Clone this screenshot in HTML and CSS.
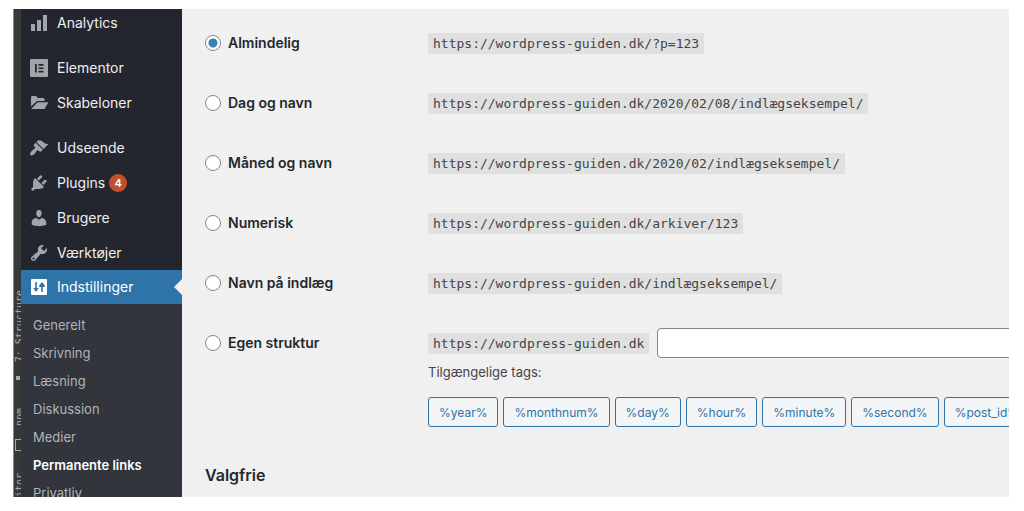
FILE: index.html
```
<!DOCTYPE html>
<html lang="da">
<head>
<meta charset="utf-8">
<title>Permanente links</title>
<link rel="stylesheet" href="styles.css">
</head>
<body>
<div class="frame">
  <div class="strip" aria-hidden="true">
    <span class="strip-text">7: Structure</span>
    <span class="strip-dot"></span>
    <span class="strip-text">npm</span>
    <span class="strip-box"></span>
    <span class="strip-text">itor</span>
  </div>
  <nav class="sidebar">
    <ul class="menu">
      <li><a href="#"><svg viewBox="0 0 20 20"><path d="M2 11h4v7H2zM8 7h4v11H8zM14 2h4v16h-4z"/></svg>Analytics</a></li>
      <li class="spaced"><a href="#"><svg viewBox="0 0 20 20"><path fill-rule="evenodd" d="M2 1h16a1 1 0 0 1 1 1v16a1 1 0 0 1-1 1H2a1 1 0 0 1-1-1V2a1 1 0 0 1 1-1zM6 6v8.500h1.800V6zM9.500 6v1.700h5V6zM9.500 9.400v1.700h5V9.400zM9.500 12.800v1.700h5v-1.700z"/></svg>Elementor</a></li>
      <li><a href="#"><svg viewBox="0 0 20 20"><path d="M2 4.500C2 3.500 2.500 3 3.500 3h3.600l1.800 2H14c1 0 1.500.5 1.500 1.500V8H8L2 13.500zM8.600 9.300H19.500L15.500 16H2.200z"/></svg>Skabeloner</a></li>
      <li class="spaced"><a href="#"><svg viewBox="0 0 20 20"><path d="M14.480 11.060L7.410 3.990l1.500-1.500c.5-.56 2.300-.47 3.510.32 1.210.8 1.430 1.280 2.910 2.100 1.180.64 2.450 1.260 4.450.85zm-.71.71L6.700 4.700 4.930 6.470c-.39.39-.39 1.020 0 1.410l1.060 1.060c.39.39.39 1.030 0 1.420-.6.6-1.430 1.110-2.210 1.690-.35.26-.7.53-1.010.84C1.430 14.230.4 16.080 1.400 17.070c.99 1 2.840-.03 4.180-1.360.31-.31.58-.66.85-1.020.57-.78 1.080-1.610 1.690-2.210.39-.39 1.020-.39 1.410 0l1.060 1.060c.39.39 1.020.39 1.410 0z"/></svg>Udseende</a></li>
      <li><a href="#"><svg viewBox="0 0 20 20"><path d="M13.110 4.360L9.870 7.600 8 5.730l3.240-3.240c.35-.34 1.050-.2 1.560.32.52.51.66 1.210.31 1.550zm-8 1.770l.91-1.120 9.010 9.010-1.190.84c-.71.71-2.630 1.160-3.820 1.160H6.140L4.900 17.260c-.59.59-1.540.59-2.120 0-.59-.58-.59-1.530 0-2.120l1.240-1.240v-3.880c0-1.130.4-3.190 1.090-3.890zm7.260 3.970l3.240-3.240c.34-.35 1.040-.21 1.550.31.52.51.66 1.210.31 1.550l-3.240 3.250z"/></svg>Plugins <span class="badge">4</span></a></li>
      <li><a href="#"><svg viewBox="0 0 20 20"><path d="M10 9.250c-2.270 0-2.730-3.440-2.730-3.440C7 4.020 7.820 2 9.970 2c2.160 0 2.980 2.020 2.710 3.810 0 0-.41 3.440-2.680 3.440zm0 2.570L12.720 10c2.390 0 4.520 2.330 4.520 4.530v2.490s-3.650 1.130-7.240 1.130c-3.650 0-7.240-1.130-7.240-1.130v-2.490c0-2.250 1.940-4.480 4.470-4.480z"/></svg>Brugere</a></li>
      <li><a href="#"><svg viewBox="0 0 20 20"><path d="M16.680 9.770c-1.340 1.340-3.300 1.670-4.950.99l-5.410 6.520c-.99.99-2.590.99-3.580 0s-.99-2.590 0-3.570l6.520-5.420c-.68-1.650-.35-3.610.99-4.950 1.280-1.280 3.120-1.620 4.720-1.060l-2.890 2.890 2.820 2.820 2.860-2.870c.53 1.580.18 3.390-1.080 4.650zM3.810 16.210c.4.39 1.040.39 1.430 0 .4-.4.4-1.040 0-1.430-.39-.4-1.030-.4-1.430 0-.39.39-.39 1.030 0 1.430z"/></svg>Værktøjer</a></li>
      <li><a href="#" class="current"><svg viewBox="0 0 20 20"><path fill-rule="evenodd" d="M3 2h14a1 1 0 0 1 1 1v14a1 1 0 0 1-1 1H3a1 1 0 0 1-1-1V3a1 1 0 0 1 1-1zM6.200 5v6H4.200L7 15l2.800-4H7.800V5zM12.200 15V10H10.200V8.500L13 5l2.800 3.500V10H13.800v5z"/></svg>Indstillinger</a></li>
    </ul>
    <ul class="submenu">
      <li><a href="#">Generelt</a></li>
      <li><a href="#">Skrivning</a></li>
      <li><a href="#">Læsning</a></li>
      <li><a href="#">Diskussion</a></li>
      <li><a href="#">Medier</a></li>
      <li><a href="#" class="active">Permanente links</a></li>
      <li><a href="#">Privatliv</a></li>
    </ul>
  </nav>
  <main class="content">
    <form class="options">
      <label class="option"><input type="radio" name="structure" checked>Almindelig</label>
      <div class="value"><code>https://wordpress-guiden.dk/?p=123</code></div>
      <label class="option"><input type="radio" name="structure">Dag og navn</label>
      <div class="value"><code>https://wordpress-guiden.dk/2020/02/08/indlægseksempel/</code></div>
      <label class="option"><input type="radio" name="structure">Måned og navn</label>
      <div class="value"><code>https://wordpress-guiden.dk/2020/02/indlægseksempel/</code></div>
      <label class="option"><input type="radio" name="structure">Numerisk</label>
      <div class="value"><code>https://wordpress-guiden.dk/arkiver/123</code></div>
      <label class="option"><input type="radio" name="structure">Navn på indlæg</label>
      <div class="value"><code>https://wordpress-guiden.dk/indlægseksempel/</code></div>
      <label class="option"><input type="radio" name="structure">Egen struktur</label>
      <div class="custom">
        <div class="value"><code>https://wordpress-guiden.dk</code><input class="field" type="text" aria-label="Egen struktur"></div>
        <p class="hint">Tilgængelige tags:</p>
        <div class="tags">
          <button type="button">%year%</button>
          <button type="button">%monthnum%</button>
          <button type="button">%day%</button>
          <button type="button">%hour%</button>
          <button type="button">%minute%</button>
          <button type="button">%second%</button>
          <button type="button">%post_id%</button>
        </div>
      </div>
    </form>
    <h2>Valgfrie</h2>
  </main>
</div>
</body>
</html>
```
FILE: styles.css
```
* {
  box-sizing: border-box;
}

body {
  margin: 0;
  height: 100vh;
  padding: 9px 15px 14px 13px;
  background: #fff;
  font-family: Inter, "Liberation Sans", sans-serif;
  font-size: 14px;
  line-height: 20px;
  color: #444;
}

ul {
  list-style: none;
  margin: 0;
  padding: 0;
}

.frame {
  display: flex;
  height: 100%;
  overflow: hidden;
  background: #f0f0f0;
}

.strip {
  flex: none;
  display: flex;
  flex-direction: column;
  align-items: flex-start;
  width: 8px;
  padding-top: 281px;
  overflow: hidden;
  background: #383838;
  border-left: 1px solid #8a8a8a;
}

.strip-text {
  flex: none;
  writing-mode: vertical-rl;
  transform: rotate(180deg);
  font: 10px/12px "DejaVu Sans Mono", monospace;
  color: #aaa;
  white-space: nowrap;
}

.strip-dot {
  flex: none;
  width: 4px;
  height: 4px;
  margin: 14px 0 28px 2px;
  background: #aaa;
}

.strip-box {
  flex: none;
  width: 12px;
  height: 12px;
  margin: 13px 0 22px 1px;
  border: 1px solid #aaa;
}

.sidebar {
  flex: none;
  display: flex;
  flex-direction: column;
  width: 161px;
  background: #23262e;
}

.menu {
  display: flex;
  flex-direction: column;
  gap: 1px;
  margin-top: -3px;
}

.menu .spaced {
  margin-top: 10px;
}

.menu li:last-child {
  margin-top: -1px;
}

.menu a {
  display: flex;
  align-items: center;
  height: 34px;
  padding-left: 8px;
  color: #eee;
  text-decoration: none;
  position: relative;
}

.menu svg {
  width: 20px;
  height: 20px;
  margin-right: 8px;
  fill: #a0a5aa;
}

.menu .current {
  background: #2e74a8;
  color: #fff;
}

.menu .current svg {
  fill: #fff;
}

.menu .current::after {
  content: "";
  position: absolute;
  right: 0;
  top: 9px;
  border: 8px solid transparent;
  border-left-width: 0;
  border-right-color: #f0f0f0;
}

.badge {
  width: 18px;
  margin-left: 4px;
  border-radius: 9px;
  background: #c2512b;
  color: #fff;
  font-size: 11px;
  font-weight: 600;
  line-height: 18px;
  text-align: center;
}

.submenu {
  flex: 1;
  padding-top: 7px;
  background: #32353c;
}

.submenu a {
  display: block;
  padding-left: 12px;
  font-size: 13px;
  line-height: 28px;
  color: #b0b4b9;
  text-decoration: none;
}

.submenu .active {
  color: #fff;
  font-weight: 600;
}

.content {
  flex: 1;
  min-width: 0;
  padding: 19px 0 0 23px;
}

.options {
  display: grid;
  grid-template-columns: 200px 1fr;
  column-gap: 23px;
  row-gap: 30px;
}

.option {
  display: flex;
  align-items: center;
  height: 30px;
  font-weight: 600;
  color: #23282d;
}

.option input {
  appearance: none;
  width: 16px;
  height: 16px;
  margin: 0 7px 0 0;
  border: 1px solid #7e8993;
  border-radius: 50%;
  background: #fff;
}

.option input:checked {
  background: radial-gradient(circle, #3582b5 4px, #fff 5px);
}

.value {
  display: flex;
  align-items: center;
  height: 30px;
  white-space: nowrap;
}

.custom {
  min-width: 0;
}

code {
  padding: 0 5px;
  background: #e0e0e0;
  font: 13px/21px "DejaVu Sans Mono", monospace;
}

.field {
  flex: none;
  width: 100%;
  height: 30px;
  margin-left: 8px;
  border: 1px solid #7e8993;
  border-radius: 4px;
  background: #fff;
}

.hint {
  margin: 4px 0 15px;
  font-size: 13px;
}

.tags {
  display: flex;
  gap: 5px;
}

.tags button {
  flex: none;
  height: 30px;
  padding: 0 10px;
  border: 1px solid #2e74a8;
  border-radius: 3px;
  background: #f3f5f6;
  color: #2e74a8;
  font-family: inherit;
  font-size: 12px;
}

h2 {
  margin: 36px 0 0;
  font-size: 16px;
  font-weight: 600;
  line-height: 24px;
  color: #23282d;
}
```
